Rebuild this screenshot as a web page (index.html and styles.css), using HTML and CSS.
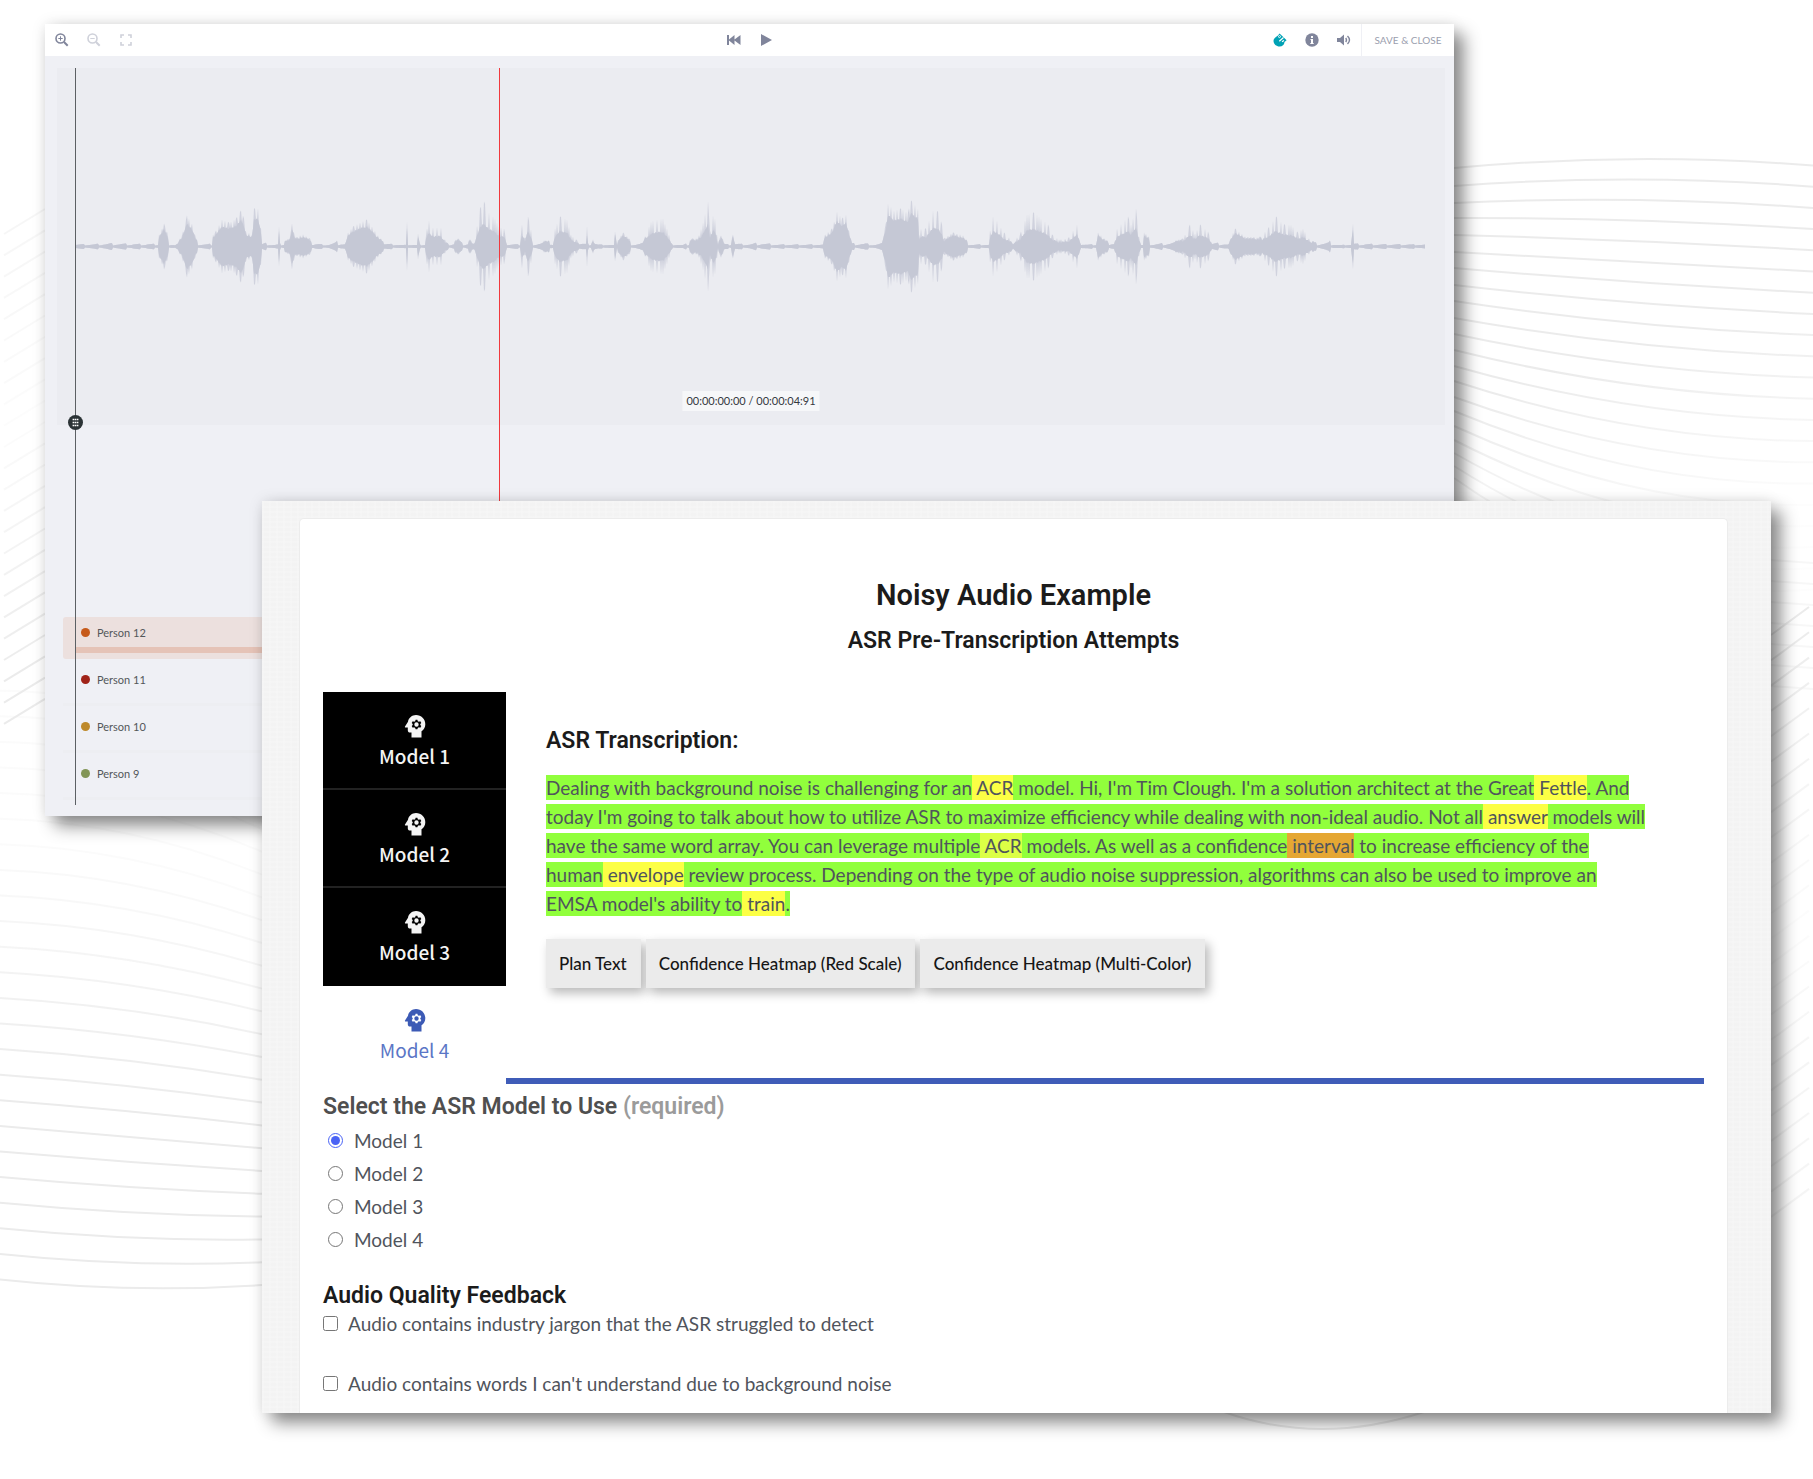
FILE: index.html
```html
<!DOCTYPE html>
<html lang="en">
<head>
<meta charset="utf-8">
<meta name="viewport" content="width=device-width, initial-scale=1">
<title>Noisy Audio Example</title>
<link rel="stylesheet" href="styles.css">
</head>
<body>
<svg width="0" height="0" class="defs" aria-hidden="true">
  <symbol id="head" viewBox="0 0 24 24">
    <path fill-rule="evenodd" d="M13 1C9 1 5.600 3.900 5 7.700L2 12.600C1.700 13.100 2 13.600 2.600 13.600H4.800V16.300C4.800 17.700 5.700 18.600 7.100 18.600H8.500V23.500H18.500V17.300C20.900 15.700 22.300 13.200 22.300 10.200C22.300 5 18.200 1 13 1ZM12.600 5.800H14.400L14.800 7.200L15.900 7.700L17.300 7.300L18.300 9L17.300 10V11L18.300 12L17.300 13.700L15.900 13.300L14.800 13.900L14.400 15.200H12.600L12.200 13.900L11.100 13.300L9.700 13.700L8.700 12L9.700 11V10L8.700 9L9.700 7.300L11.100 7.700L12.200 7.200ZM13.500 8.300A2.200 2.200 0 1 0 13.500 12.700A2.200 2.200 0 1 0 13.500 8.300Z"/>
  </symbol>
</svg>
<svg class="ripples" width="1813" height="1479" viewBox="0 0 1813 1479" aria-hidden="true">
  <defs>
    <linearGradient id="fadeTop" gradientUnits="userSpaceOnUse" x1="1454" y1="400" x2="1510" y2="590">
      <stop offset="0" stop-color="#ebebeb"/><stop offset="1" stop-color="#ebebeb" stop-opacity=".1"/>
    </linearGradient>
  </defs>
  <g id="rippleLines" fill="none" stroke="#ebebeb" stroke-width="2"></g>
</svg>

<main class="desktop">
  <section class="editor" aria-label="Audio editor">
    <header class="toolbar">
      <div class="tools">
        <button class="tool" aria-label="Zoom in"><svg width="14" height="14" viewBox="0 0 14 14"><g fill="none" stroke="currentColor"><circle cx="5.500" cy="5.500" r="4.500" stroke-width="1.600"/><path d="M9 9L12.700 12.700" stroke-width="2"/><path d="M3.300 5.500H7.700M5.500 3.300V7.700"/></g></svg></button>
        <button class="tool tool-off" aria-label="Zoom out"><svg width="14" height="14" viewBox="0 0 14 14"><g fill="none" stroke="currentColor"><circle cx="5.500" cy="5.500" r="4.500" stroke-width="1.600"/><path d="M9 9L12.700 12.700" stroke-width="2"/><path d="M3.300 5.500H7.700"/></g></svg></button>
        <button class="tool tool-off" aria-label="Fit to screen"><svg width="14" height="14" viewBox="0 0 14 14"><path fill="none" stroke="currentColor" stroke-width="1.600" d="M2 5V2H5M9 2H12V5M12 9V12H9M5 12H2V9"/></svg></button>
      </div>
      <div class="transport">
        <button class="tool" aria-label="Back to start"><svg width="14" height="14" viewBox="0 0 14 14"><path fill="currentColor" d="M0 2H2V6.500L7.500 2V6.500L13.500 2V12L7.500 7.500V12L2 7.500V12H0Z"/></svg></button>
        <button class="tool" aria-label="Play"><svg width="14" height="14" viewBox="0 0 14 14"><path fill="currentColor" d="M2 1L13 7L2 13Z"/></svg></button>
      </div>
      <div class="actions">
        <button class="tool tool-on" aria-label="Labels"><svg width="14" height="14" viewBox="0 0 14 14"><path fill="currentColor" d="M5 2.500L6.500 0.500L9.500 3.200L13.600 7.300L11.500 9C11.300 11.800 9.400 13.600 6.600 13.600C3.300 13.600 0.500 11.200 0.500 7.800C0.500 5.400 2.500 4.500 5 2.500Z"/><g fill="none" stroke="#fff"><circle cx="6.500" cy="3.600" r="1" stroke-width=".9"/><path stroke-width="1.200" d="M10.500 4.500L6.300 8.300M9 8.800L11 7.600"/></g></svg></button>
        <button class="tool" aria-label="Information"><svg width="14" height="14" viewBox="0 0 14 14"><circle cx="7" cy="7" r="6.700" fill="currentColor"/><path fill="#fff" d="M6 3H8V5H6ZM5.500 6H8V10H8.700V11H5.300V10H6V7H5.500Z"/></svg></button>
        <button class="tool" aria-label="Volume"><svg width="14" height="14" viewBox="0 0 14 14"><path fill="currentColor" d="M0 5H3L7 1.500V12.500L3 9H0Z"/><path fill="none" stroke="currentColor" stroke-width="1.400" d="M8.700 5Q10.300 7 8.700 9M10.500 3Q14.500 7 10.500 11"/></svg></button>
        <button class="save">SAVE &amp; CLOSE</button>
      </div>
    </header>
    <div class="stage">
      <div class="wave">
        <svg class="wave-plot" viewBox="0 0 1388 357" preserveAspectRatio="none" role="img" aria-label="Waveform">
          <path id="waveTips" fill="#c5c8d5" fill-opacity=".7"/>
          <path id="waveBody" fill="#c5c8d5"/>
        </svg>
        <output class="timecode">00:00:00:00 / 00:00:04:91</output>
      </div>
      <ul class="tracks">
        <li class="track track-active"><span class="dot dot-orange"></span>Person 12</li>
        <li class="track"><span class="dot dot-red"></span>Person 11</li>
        <li class="track"><span class="dot dot-gold"></span>Person 10</li>
        <li class="track"><span class="dot dot-green"></span>Person 9</li>
      </ul>
      <div class="cursor"><svg class="grip" width="15" height="15" viewBox="0 0 15 15"><circle cx="7.500" cy="7.500" r="7.500" fill="#2b3336"/><path stroke="#fff" stroke-width="1.600" stroke-dasharray="1.600 .5" d="M4.600 4.500H10.500M4.600 7.500H10.500M4.600 10.500H10.500"/></svg></div>
      <div class="playhead"></div>
    </div>
  </section>

  <section class="review">
    <div class="card">
      <h1>Noisy Audio Example</h1>
      <h2>ASR Pre-Transcription Attempts</h2>
      <div class="models">
        <nav class="tabs" aria-label="Models">
          <button class="tab"><svg class="tab-icon"><use href="#head"/></svg>Model 1</button>
          <button class="tab"><svg class="tab-icon"><use href="#head"/></svg>Model 2</button>
          <button class="tab"><svg class="tab-icon"><use href="#head"/></svg>Model 3</button>
          <button class="tab tab-current"><svg class="tab-icon"><use href="#head"/></svg>Model 4</button>
        </nav>
        <div class="panel">
          <h3>ASR Transcription:</h3>
          <p class="transcript"><span class="high">Dealing with background noise is challenging for an<mark class="mid"> ACR</mark> model. Hi, I'm Tim Clough. I'm a solution architect at the Great<mark class="mid"> Fettle</mark>. And<br>today I'm going to talk about how to utilize ASR to maximize efficiency while dealing with non-ideal audio. Not all<mark class="mid"> answer</mark> models will<br>have the same word array. You can leverage multiple<mark class="fair"> ACR</mark> models. As well as a confidence<mark class="low"> interval</mark> to increase efficiency of the<br>human<mark class="mid"> envelope</mark> review process. Depending on the type of audio noise suppression, algorithms can also be used to improve an<br>EMSA model's ability to<mark class="mid"> train</mark>.</span></p>
          <div class="views">
            <button class="view">Plan Text</button>
            <button class="view">Confidence Heatmap (Red Scale)</button>
            <button class="view">Confidence Heatmap (Multi-Color)</button>
          </div>
        </div>
      </div>
      <fieldset class="choices">
        <legend>Select the ASR Model to Use <span class="required">(required)</span></legend>
        <label class="choice"><input type="radio" name="model" checked>Model 1</label>
        <label class="choice"><input type="radio" name="model">Model 2</label>
        <label class="choice"><input type="radio" name="model">Model 3</label>
        <label class="choice"><input type="radio" name="model">Model 4</label>
      </fieldset>
      <fieldset class="feedback">
        <legend>Audio Quality Feedback</legend>
        <label class="check"><input type="checkbox">Audio contains industry jargon that the ASR struggled to detect</label>
        <label class="check"><input type="checkbox">Audio contains words I can't understand due to background noise</label>
      </fieldset>
    </div>
  </section>
</main>
<script src="app.js"></script>
</body>
</html>
```
FILE: styles.css
```css
* { box-sizing: border-box; }

body {
  margin: 0;
  background: #fff;
  color: #50545c;
  font-family: Lato, "Liberation Sans", sans-serif;
}

button { border: 0; margin: 0; padding: 0; background: none; font: inherit; color: inherit; }
svg { display: block; }
.defs { position: absolute; }

.ripples { position: absolute; top: 0; left: 0; max-width: 100%; }

.desktop { position: relative; padding: 501px 42px 66px 262px; }

/* Audio editor, behind */
.editor {
  position: absolute;
  top: 24px;
  left: 45px;
  right: 359px;
  background: #eff0f5;
  box-shadow: 10px 10px 16px rgba(0, 0, 0, .44), 0 0 14px rgba(0, 0, 0, .1);
}

.toolbar {
  display: grid;
  grid-template-columns: 1fr auto 1fr;
  align-items: center;
  height: 32px;
  background: #fff;
}
.tools { display: flex; gap: 18px; padding-left: 10px; }
.transport { display: flex; gap: 18px; }
.actions { display: flex; gap: 18px; justify-content: flex-end; align-items: center; }
.tool { color: #80859b; }
.tool-off { color: #cfd1da; }
.tool-on { color: #00a2b5; }
.save {
  height: 32px;
  min-width: 93px;
  margin-left: -8px;
  padding: 0 12px;
  border-left: 1px solid #eff0f5;
  color: #9a9eae;
  font-size: 10px;
}

.stage { position: relative; height: 760px; padding: 12px 9px 0 12px; }
.wave { position: relative; height: 357px; background: #ebecf1; }
.wave-plot { width: 100%; height: 100%; }
.timecode {
  position: absolute;
  bottom: 14px;
  left: 50%;
  transform: translateX(-50%);
  padding: 0 4px;
  background: #f6f7f9;
  color: #35393e;
  font-size: 11px;
  line-height: 20px;
  white-space: nowrap;
}

.tracks { margin: 192px 0 0 6px; padding: 0; list-style: none; }
.track {
  display: flex;
  align-items: flex-start;
  gap: 7px;
  height: 42px;
  margin-bottom: 5px;
  padding: 8px 0 0 18px;
  border-bottom: 3px solid #edeef2;
  color: #53575a;
  font-size: 11px;
  line-height: 15px;
}
.track-active {
  border: 0;
  border-radius: 3px;
  background: linear-gradient(#e5c3b7, #e5c3b7) 12px 30px / 100% 6px no-repeat #ece0de;
}
.dot { width: 9px; height: 9px; margin-top: 3px; border-radius: 50%; }
.dot-orange { background: #c65a1a; }
.dot-red { background: #a02318; }
.dot-gold { background: #be8a2b; }
.dot-green { background: #829556; }

.cursor { position: absolute; top: 12px; bottom: 11px; left: 30px; width: 1px; background: #5c6064; }
.grip { position: absolute; top: 347px; left: -7px; }
.playhead { position: absolute; top: 12px; bottom: 11px; left: 454px; width: 1px; background: #f0393e; }

/* Review form, in front */
.review {
  position: relative;
  padding: 17px 43px 0 37px;
  background:
    repeating-linear-gradient(0deg, rgba(255, 255, 255, .15) 0 2px, transparent 2px 5px),
    repeating-linear-gradient(90deg, rgba(255, 255, 255, .15) 0 2px, transparent 2px 7px),
    #f3f3f3;
  box-shadow: 10px 10px 16px rgba(0, 0, 0, .44), 0 0 14px rgba(0, 0, 0, .1);
}
.card {
  padding: 59px 23px 17px;
  border: 1px solid #ececec;
  border-bottom: 0;
  border-radius: 5px 5px 0 0;
  background: #fff;
}

h1, h2, h3, legend { margin: 0; padding: 0; font-family: Roboto, "Liberation Sans", sans-serif; font-weight: 600; color: #1b1b1b; }
h1 { font-size: 29px; line-height: 34px; text-align: center; }
h2 { margin-top: 15px; font-size: 23px; line-height: 28px; text-align: center; }
h3 { font-size: 23px; line-height: 28px; }

.models { display: flex; margin-top: 37px; }
.tabs { display: flex; flex-direction: column; flex: none; width: 183px; }
.tab {
  display: flex;
  flex-direction: column;
  align-items: center;
  height: 98px;
  padding-top: 21px;
  border-bottom: 2px solid #222;
  background: #000;
  color: #f4f4f4;
  font-family: "Noto Sans CJK SC", sans-serif;
  font-size: 19px;
  font-weight: 500;
  line-height: 34px;
}
.tab:nth-child(3) { border-bottom: 0; }
.tab-icon { width: 24px; height: 26px; fill: currentColor; }
.tab-current { border: 0; background: none; color: #5b76c6; font-weight: 400; }
.tab-current .tab-icon { fill: #3c5ab5; }

.panel { flex: 1; padding: 35px 0 0 40px; border-bottom: 6px solid #3f5cb8; }
.transcript { margin: 18px 0 0; font-size: 19px; line-height: 29px; white-space: nowrap; }
.high, mark { padding: 1px 0; }
.high { background: #91ff3c; }
mark { color: inherit; }
.mid { background: #fcff45; }
.fair { background: #dcff45; }
.low { background: #e5a733; }

.views { display: flex; gap: 5px; margin-top: 21px; }
.view {
  height: 49px;
  padding: 0 14px 0 13px;
  background: #ebebeb;
  color: #161616;
  font-size: 17px;
  font-weight: 500;
  box-shadow: 4px 5px 10px rgba(0, 0, 0, .28);
}

fieldset { min-width: 0; margin: 0; padding: 0; border: 0; }
legend { font-size: 23px; line-height: 28px; }
.choices { margin-top: 9px; }
.choices legend { margin-bottom: 3px; color: #4f4f4f; }
.required { color: #9b9b9b; }
.choice { display: flex; align-items: center; gap: 11px; height: 33px; padding-left: 5px; font-size: 19px; }
.feedback { margin-top: 26px; }
.check { display: flex; align-items: center; gap: 10px; height: 26px; font-size: 19px; }
.check + .check { margin-top: 34px; }
input { width: 15px; height: 15px; margin: 0; accent-color: #4a63f5; }
```
FILE: app.js
```js
const SVG = "http://www.w3.org/2000/svg";

// Peak samples: time position, amplitude
const peaks = [
  18,3, 30,2, 53,4, 75,3, 101,3, 102,12, 105,18, 107,23, 110,15, 112,5, 118,1, 125,11, 130,31, 135,23, 139,8, 143,2, 155,3,
  156,12, 158,14, 165,27, 172,24, 179,28, 184,36, 187,28, 189,15, 195,12, 197,38, 201,38, 204,18, 205,3, 210,5, 214,1, 221,2,
  222,20, 223,4, 228,6, 233,9, 235,23, 238,9, 246,12, 253,8, 256,3, 261,3, 270,1, 280,6, 288,3, 291,14, 296,20, 303,24, 310,27,
  315,20, 321,11, 328,4, 338,2, 349,1, 350,25, 351,2, 360,1, 361,13, 363,2, 368,3, 370,18, 372,26, 376,19, 384,19, 388,7,
  392,2, 401,8, 408,3, 413,7, 417,3, 423,38, 427,45, 432,34, 438,28, 442,20, 447,18, 450,3, 463,2, 465,22, 468,9, 471,30, 474,17,
  476,3, 487,6, 492,6, 496,2, 498,18, 503,30, 510,27, 514,12, 519,7, 529,3, 530,20, 531,4, 536,7, 541,2, 557,1, 558,15, 560,5,
  566,14, 572,8, 577,2, 586,5, 594,25, 600,27, 606,28, 610,18, 615,3, 626,1, 635,8, 641,8, 646,24, 651,45, 653,16, 656,31,
  658,28, 661,4, 664,11, 668,3, 673,2, 676,12, 678,4, 684,3, 690,2, 701,5, 720,2, 766,2, 768,12, 775,18, 780,35, 785,28,
  789,32, 792,16, 795,4, 809,4, 816,1, 825,4, 829,24, 831,43, 837,36, 844,38, 851,34, 854,46, 861,38, 862,12, 864,18, 869,18,
  876,36, 881,35, 885,22, 887,8, 896,14, 906,11, 910,6, 913,2, 932,2, 933,16, 936,30, 940,26, 947,14, 956,5, 963,12, 970,32,
  977,34, 982,30, 991,22, 995,12, 1002,7, 1011,8, 1020,22, 1024,4, 1030,2, 1039,2, 1041,14, 1048,7, 1057,4, 1060,18, 1071,30,
  1074,22, 1079,38, 1082,10, 1084,2, 1086,1, 1087,14, 1092,10, 1093,2, 1105,4, 1119,6, 1126,8, 1133,22, 1138,13, 1143,22,
  1151,15, 1155,4, 1163,5, 1171,2, 1178,18, 1188,10, 1202,9, 1211,18, 1219,30, 1227,22, 1234,22, 1241,14, 1246,18, 1252,8,
  1261,4, 1273,6, 1282,1, 1294,2, 1296,23, 1297,4, 1303,3, 1369,2
];

// Voiced stretches with widely spaced pulses
const pulsed = [[370, 390], [418, 450], [463, 476], [497, 545], [590, 615], [643, 661], [862, 888], [932, 1024], [1057, 1084], [1126, 1155], [1205, 1255]];

// Interpolated envelope; every few samples reaches its full peak
function outline(tips) {
  const upper = [];
  const lower = [];
  for (let i = 0; i + 3 < peaks.length; i += 2) {
    const [x0, a0, x1, a1] = peaks.slice(i, i + 4);
    for (let x = x0; x < x1; x++) {
      const peak = a0 + (a1 - a0) * (x - x0) / (x1 - x0);
      const jitter = ((x * 37) % 11) / 11;
      const sparse = pulsed.some(([from, to]) => x >= from && x <= to);
      const floor = sparse ? .48 : .7;
      let a = peak * floor + jitter * 2;
      if (tips && (x % (sparse ? 4 : 3) === 0 || x === x0)) a = peak;
      if (peak < 6) a = 1 + peak * .7 * (((x >> 1) * 29) % 7) / 7;
      a = Math.min(a, Math.max(peak, 3));
      upper.push(`${x} ${(178.5 - a).toFixed(1)}`);
      lower.unshift(`${x} ${(178.5 + a).toFixed(1)}`);
    }
  }
  return `M${upper.concat(lower).join("L")}Z`;
}
document.getElementById("waveTips").setAttribute("d", outline(true));
document.getElementById("waveBody").setAttribute("d", outline(false));

// Decorative background lines
const lines = document.getElementById("rippleLines");
function line(d, opacity, stroke) {
  const path = document.createElementNS(SVG, "path");
  path.setAttribute("d", d);
  path.setAttribute("opacity", opacity);
  if (stroke) path.setAttribute("stroke", stroke);
  lines.append(path);
}
function bend(x0, y0, ym, x1, y1) {
  return `M${x0} ${y0}Q${(x0 + x1) / 2} ${2 * ym - (y0 + y1) / 2} ${x1} ${y1}`;
}

const starts = [168, 186, 203, 218, 235, 252, 268, 285, 301, 318, 334, 350, 366, 381, 397, 411, 426, 440, 453, 466, 478];
starts.forEach((y, k) => line(bend(1454, y, 159 + k * 20.5, 1813, 165.5 + k * 21.2), 1, "url(#fadeTop)"));
for (let k = 0; k < 7; k++) line(`M1771 ${560 + k * 21}L1813 ${563 + k * 21}`, .4);

for (let k = 0; k < 24; k++) {
  const opacity = k < 8 ? 1 : Math.max(.2, 1 - (k - 7) * .08);
  line(bend(0, 1279.5 - k * 25.6, 1288 - k * 25.2, 262, 1285 - k * 22.8), opacity);
}
for (let k = 0; k < 24; k++) {
  const y = 234 + k * 21.3;
  line(`M4 ${y}L45 ${y - 25}`, k < 9 ? .45 - k * .03 : Math.min(1, .15 + (k - 9) * .07));
  const z = 607 + k * 25.3;
  line(`M1771 ${z + 28}L1809 ${z}`, k < 12 ? 1 - k * .07 : Math.min(.5, .15 + (k - 12) * .06));
}
line("M1224 1412Q1320 1446 1424 1412", 1);
```
